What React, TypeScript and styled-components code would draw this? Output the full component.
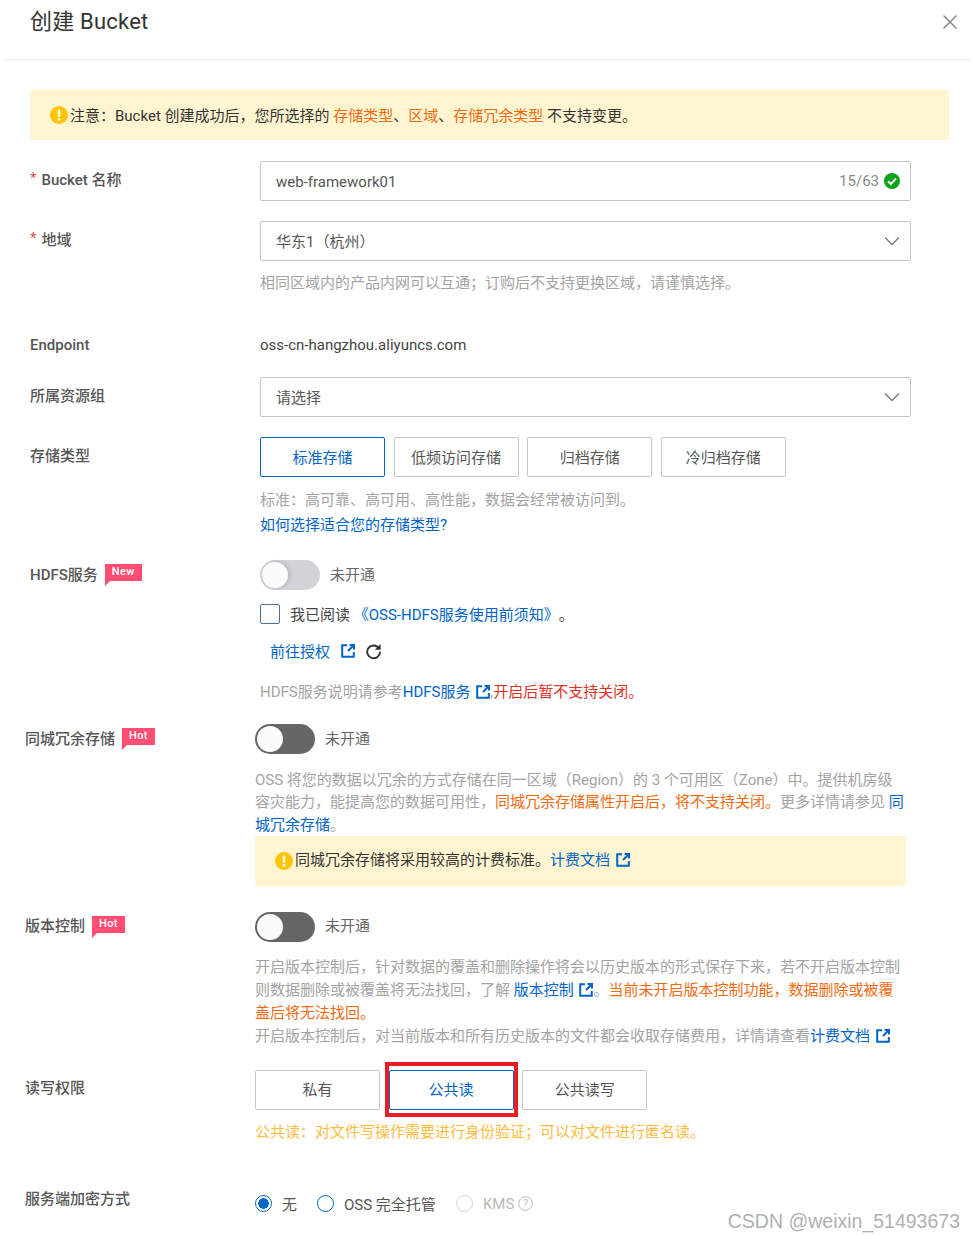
import React from "react";
import styled, { createGlobalStyle } from "styled-components";

const Global = createGlobalStyle`
  html, body { margin: 0; padding: 0; background: #fff; }
  body {
    font-family: Roboto, "Noto Sans CJK SC", sans-serif;
    font-size: 15px;
    color: #333;
    text-spacing-trim: space-all;
  }
  * { box-sizing: border-box; }
`;

const Page = styled.div`
  position: relative;
  width: 975px;
  height: 1239px;
  overflow: hidden;
`;
const Header = styled.header`
  display: flex;
  justify-content: space-between;
  height: 60px;
  margin: 0 5px;
  padding: 5px 11px 0 25px;
  border-bottom: 1px solid #ececec;
`;
const Title = styled.h1`
  margin: 0;
  font-size: 22px;
  font-weight: 400;
  line-height: 34px;
  letter-spacing: 0.2px;
  color: #333;
`;
const Close = styled.button`
  width: 18px;
  height: 18px;
  margin-top: 9px;
  padding: 0;
  border: 0;
  background: none;
  color: #8a8a8a;
`;
const Body = styled.main`
  padding: 30px 26px 0 30px;
`;
const Notice = styled.div<{ $w: number }>`
  display: flex;
  align-items: center;
  gap: 2px;
  width: ${(p) => p.$w}px;
  height: 50px;
  padding-left: 20px;
  background: #fff5d1;
  border-radius: 2px;
  color: #333;
`;
const Row = styled.section<{ $top: number; $shift?: boolean }>`
  display: grid;
  grid-template-columns: 230px 651px;
  margin-top: ${(p) => p.$top}px;
  margin-left: ${(p) => (p.$shift ? -5 : 0)}px;
`;
const Label = styled.label<{ $lh?: number }>`
  display: flex;
  align-items: center;
  align-self: start;
  gap: 7px;
  height: ${(p) => p.$lh ?? 34}px;
  font-weight: 500;
  color: #555;
  white-space: nowrap;
`;
const Star = styled.span`
  color: #e5503f;
  font-weight: 400;
  margin-right: -2px;
`;
const Field = styled.div`
  display: flex;
  align-items: center;
  justify-content: space-between;
  height: 40px;
  padding: 0 10px 0 15px;
  border: 1px solid #c4c6cf;
  border-radius: 2px;
  color: #555;
`;
const Counter = styled.span`
  display: flex;
  align-items: center;
  gap: 5px;
  color: #888;
`;
const Up = styled.span<{ $by?: number }>`
  margin-bottom: ${(p) => p.$by ?? 2}px;
`;
const Down = styled.span`
  margin-top: 2px;
`;
const Hint = styled.div<{ $mt?: number; $color?: string; $lh?: number }>`
  margin-top: ${(p) => p.$mt ?? 0}px;
  color: ${(p) => p.$color ?? "#a3a3a3"};
  line-height: ${(p) => p.$lh ?? 23}px;
`;
const Link = styled.a`
  color: #0064c8;
`;
const Orange = styled.span`
  color: #f26a0f;
`;
const Red = styled.span`
  color: #e0301e;
`;
const Plain = styled.div`
  height: 36px;
  line-height: 36px;
  color: #444;
`;
const Buttons = styled.div`
  display: flex;
  gap: 8.6px;
`;
const Choice = styled.div<{ $on?: boolean }>`
  display: flex;
  align-items: center;
  justify-content: center;
  width: 125px;
  height: 40px;
  padding-bottom: 2px;
  border: 1px solid ${(p) => (p.$on ? "#0064c8" : "#c4c6cf")};
  border-radius: 2px;
  color: ${(p) => (p.$on ? "#0064c8" : "#555")};
`;
const Flag = styled.span`
  position: relative;
  display: inline-block;
  height: 17px;
  padding: 0 7px;
  margin-top: -1px;
  background: #ff4d73;
  color: #fff;
  font-size: 11px;
  font-weight: 500;
  line-height: 16px;
  letter-spacing: 0.4px;
  &::after {
    content: "";
    position: absolute;
    left: 0;
    bottom: -5px;
    border-top: 5px solid #ff4d73;
    border-right: 5px solid transparent;
  }
`;
const SwitchRow = styled.div`
  display: flex;
  align-items: center;
  gap: 10px;
  height: 30px;
  color: #666;
`;
const Track = styled.span<{ $dark?: boolean }>`
  display: block;
  width: 60px;
  height: 30px;
  padding: 2px;
  border-radius: 15px;
  background: ${(p) => (p.$dark ? "#666" : "#d0d3d8")};
`;
const Knob = styled.span<{ $shade?: boolean }>`
  display: block;
  width: 26px;
  height: 26px;
  border-radius: 50%;
  background: #fbfbfb;
  ${(p) => (p.$shade ? "box-shadow: 2px 0 4px rgba(0, 0, 0, 0.14);" : "")}
`;
const CheckRow = styled.div`
  display: flex;
  align-items: center;
  gap: 10px;
  height: 20px;
  margin-top: 14px;
  color: #444;
`;
const Box = styled.span`
  display: block;
  width: 20px;
  height: 20px;
  border: 1px solid #4a7297;
  border-radius: 2px;
`;
const AuthRow = styled.div`
  display: flex;
  align-items: center;
  gap: 9px;
  height: 20px;
  margin-top: 17px;
  padding-left: 10px;
  color: #0064c8;
`;
const Radios = styled.div`
  display: flex;
  align-items: center;
  height: 20px;
  margin-top: 13px;
  color: #555;
`;
const Radio = styled.span<{ $on?: boolean; $off?: boolean }>`
  display: block;
  width: 17px;
  height: 17px;
  margin-right: 10px;
  border-radius: 50%;
  border: 1px solid ${(p) => (p.$off ? "#d2d4d9" : "#0064c8")};
  ${(p) => (p.$on ? "background: radial-gradient(circle, #0064c8 0 5px, #fff 5.5px);" : "")}
`;
const RadioText = styled.span<{ $off?: boolean; $gap: number }>`
  display: flex;
  align-items: center;
  gap: 4px;
  margin-right: ${(p) => p.$gap}px;
  color: ${(p) => (p.$off ? "#b8b8b8" : "#555")};
`;
const RedBox = styled.div`
  position: absolute;
  left: 385px;
  top: 1062px;
  width: 133px;
  height: 55px;
  border: 4px solid #ec1c24;
  pointer-events: none;
`;
const Watermark = styled.div`
  position: absolute;
  right: 15px;
  top: 1209px;
  font-family: "Liberation Sans", sans-serif;
  font-size: 19.5px;
  line-height: 24px;
  color: #b0b0b0;
`;

const WarnIcon = () => (
  <svg width="18" height="18" viewBox="0 0 18 18" style={{ flex: "none" }}>
    <circle cx="9" cy="9" r="9" fill="#ffc400" />
    <rect x="7.8" y="3.5" width="2.4" height="7.5" rx="1" fill="#fff" />
    <circle cx="9" cy="13.5" r="1.4" fill="#fff" />
  </svg>
);
const CheckIcon = () => (
  <svg width="16" height="16" viewBox="0 0 16 16">
    <circle cx="8" cy="8" r="8" fill="#0aa41a" />
    <path d="M4 8.2l2.8 2.8L12 5.6" fill="none" stroke="#fff" strokeWidth="2" />
  </svg>
);
const Chevron = () => (
  <svg width="16" height="10" viewBox="0 0 16 10">
    <path d="M1 1.5l7 7 7-7" fill="none" stroke="#777" strokeWidth="1.3" />
  </svg>
);
const Ext = () => (
  <svg width="14" height="14" viewBox="0 0 14 14" style={{ verticalAlign: "-2px", margin: "0 0 0 2px" }}>
    <path d="M6 1.2H1.2v11.6h11.6V8" fill="none" stroke="#0064c8" strokeWidth="2" />
    <path d="M7 7l5-5M8.6 1h4.4v4.4" fill="none" stroke="#0064c8" strokeWidth="2" />
  </svg>
);
const Refresh = () => (
  <svg width="17" height="17" viewBox="0 0 17 17" style={{ marginLeft: 1 }}>
    <path d="M14 5.4A6.4 6.4 0 1 0 15 8.6" fill="none" stroke="#333" strokeWidth="1.9" />
    <path d="M15.6 1v5.8H9.8z" fill="#333" />
  </svg>
);
const Help = () => (
  <svg width="15" height="15" viewBox="0 0 15 15">
    <circle cx="7.5" cy="7.5" r="6.8" fill="none" stroke="#b8b8b8" />
    <text x="7.5" y="11" fontSize="10" textAnchor="middle" fill="#b8b8b8">?</text>
  </svg>
);

export default function App() {
  return (
    <Page>
      <Global />
      <Header>
        <Title>创建 Bucket</Title>
        <Close aria-label="关闭">
          <svg width="16" height="16" viewBox="0 0 16 16">
            <path d="M1.5 1.5l13 13M14.5 1.5l-13 13" stroke="currentColor" strokeWidth="1.5" fill="none" />
          </svg>
        </Close>
      </Header>
      <Body>
        <Notice $w={919}>
          <WarnIcon />
          <Up>
            注意：Bucket 创建成功后，您所选择的 <Orange>存储类型</Orange>、<Orange>区域</Orange>、<Orange>存储冗余类型</Orange> 不支持变更。
          </Up>
        </Notice>
        <Row $top={21}>
          <Label><Star>*</Star>Bucket 名称</Label>
          <Field>
            <Down>web-framework01</Down>
            <Counter>15/63 <CheckIcon /></Counter>
          </Field>
        </Row>
        <Row $top={20}>
          <Label><Star>*</Star>地域</Label>
          <div>
            <Field><Up>华东1（杭州）</Up><Chevron /></Field>
            <Hint $mt={11}>相同区域内的产品内网可以互通；订购后不支持更换区域，请谨慎选择。</Hint>
          </div>
        </Row>
        <Row $top={32}>
          <Label $lh={36}>Endpoint</Label>
          <Plain>oss-cn-hangzhou.aliyuncs.com</Plain>
        </Row>
        <Row $top={14}>
          <Label>所属资源组</Label>
          <Field><Up>请选择</Up><Chevron /></Field>
        </Row>
        <Row $top={20}>
          <Label>存储类型</Label>
          <div>
            <Buttons>
              <Choice $on>标准存储</Choice>
              <Choice>低频访问存储</Choice>
              <Choice>归档存储</Choice>
              <Choice>冷归档存储</Choice>
            </Buttons>
            <Hint $mt={12}>标准：高可靠、高可用、高性能，数据会经常被访问到。</Hint>
            <Hint $mt={2}><Link>如何选择适合您的存储类型?</Link></Hint>
          </div>
        </Row>
        <Row $top={23}>
          <Label $lh={26}>HDFS服务 <Flag>New</Flag></Label>
          <div>
            <SwitchRow>
              <Track><Knob $shade /></Track>
              <Up $by={4}>未开通</Up>
            </SwitchRow>
            <CheckRow>
              <Box />
              <Up>我已阅读 <Link>《OSS-HDFS服务使用前须知》</Link>。</Up>
            </CheckRow>
            <AuthRow>
              <Up>前往授权</Up> <Ext /> <Refresh />
            </AuthRow>
            <Hint $mt={20}>
              HDFS服务说明请参考<Link>HDFS服务 <Ext /></Link>,<Red>开启后暂不支持关闭。</Red>
            </Hint>
          </div>
        </Row>
        <Row $top={20} $shift>
          <Label $lh={26}>同城冗余存储 <Flag>Hot</Flag></Label>
          <div>
            <SwitchRow>
              <Track $dark><Knob /></Track>
              <Up $by={4}>未开通</Up>
            </SwitchRow>
            <Hint $mt={15} $lh={22.3}>
              OSS 将您的数据以冗余的方式存储在同一区域（Region）的 3 个可用区（Zone）中。提供机房级容灾能力，能提高您的数据可用性，<Orange>同城冗余存储属性开启后，将不支持关闭。</Orange>更多详情请参见 <Link>同城冗余存储</Link>。
            </Hint>
            <Notice $w={651}>
              <WarnIcon />
              <Up $by={4}>同城冗余存储将采用较高的计费标准。<Link>计费文档 <Ext /></Link></Up>
            </Notice>
          </div>
        </Row>
        <Row $top={26} $shift>
          <Label $lh={26}>版本控制 <Flag>Hot</Flag></Label>
          <div>
            <SwitchRow>
              <Track $dark><Knob /></Track>
              <Up $by={4}>未开通</Up>
            </SwitchRow>
            <Hint $mt={14}>
              开启版本控制后，针对数据的覆盖和删除操作将会以历史版本的形式保存下来，若不开启版本控制则数据删除或被覆盖将无法找回，了解 <Link>版本控制 <Ext /></Link>。<Orange>当前未开启版本控制功能，数据删除或被覆盖后将无法找回。</Orange>
              <br />
              开启版本控制后，对当前版本和所有历史版本的文件都会收取存储费用，详情请查看<Link>计费文档 <Ext /></Link>
            </Hint>
          </div>
        </Row>
        <Row $top={22} $shift>
          <Label>读写权限</Label>
          <div>
            <Buttons>
              <Choice>私有</Choice>
              <Choice $on>公共读</Choice>
              <Choice>公共读写</Choice>
            </Buttons>
            <Hint $mt={11} $color="#fdbb3c">公共读：对文件写操作需要进行身份验证；可以对文件进行匿名读。</Hint>
          </div>
        </Row>
        <Row $top={37} $shift>
          <Label>服务端加密方式</Label>
          <Radios>
            <Radio $on /><RadioText $gap={20}>无</RadioText>
            <Radio /><RadioText $gap={20}>OSS 完全托管</RadioText>
            <Radio $off /><RadioText $off $gap={0}>KMS <Help /></RadioText>
          </Radios>
        </Row>
      </Body>
      <RedBox />
      <Watermark>CSDN @weixin_51493673</Watermark>
    </Page>
  );
}
